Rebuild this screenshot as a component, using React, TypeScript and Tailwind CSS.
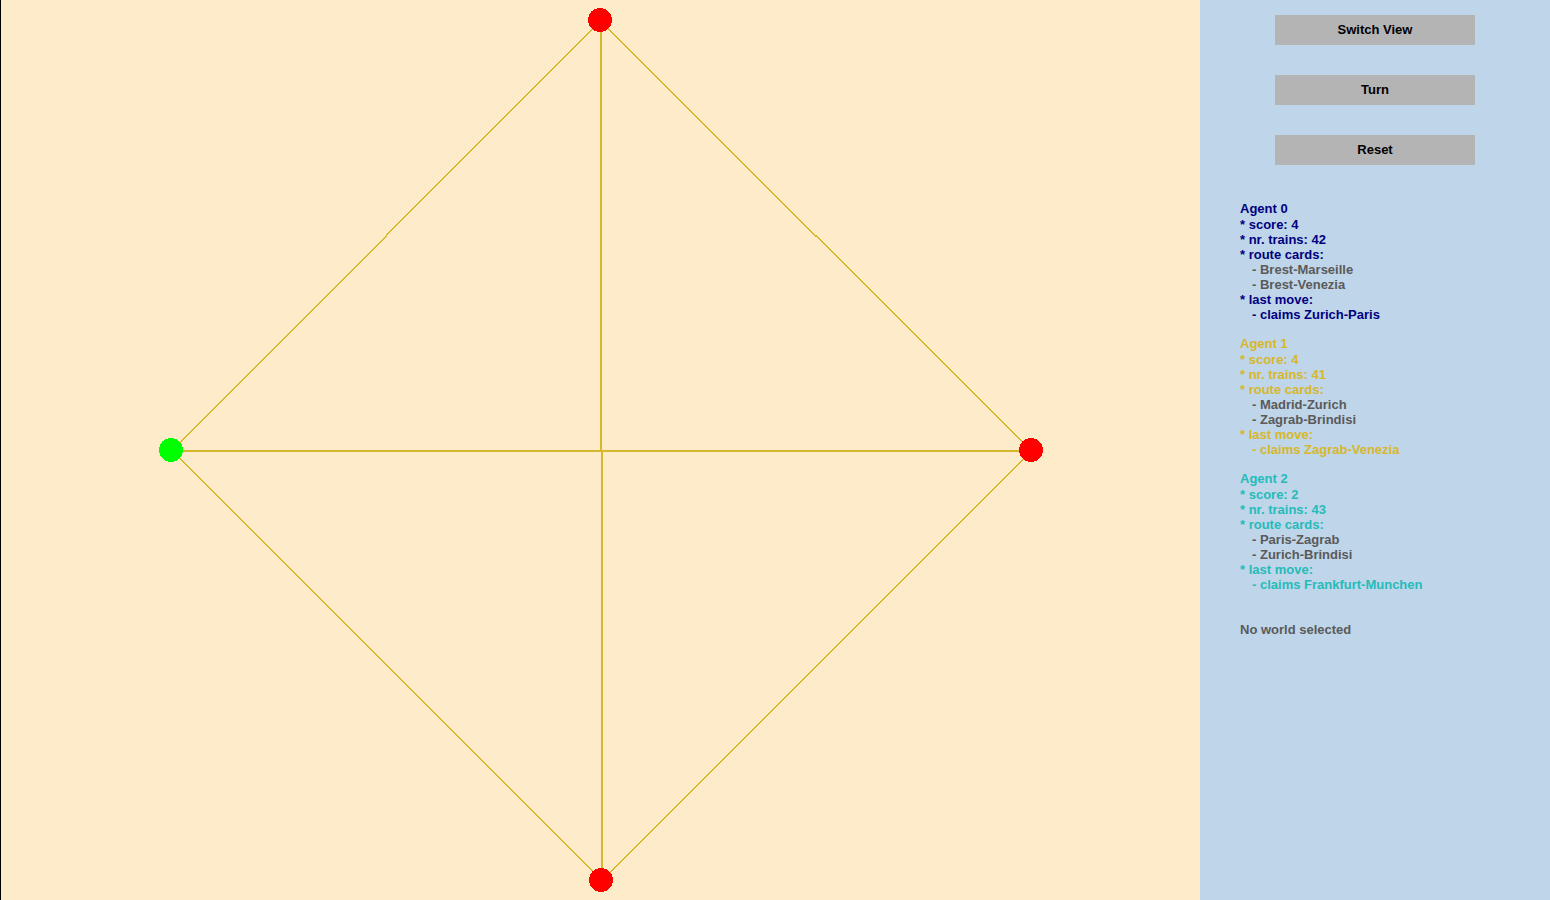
type Agent = {
  name: string;
  score: number;
  trains: number;
  cards: string[];
  lastMove: string;
  color: string;
};

const agents: Agent[] = [
  {
    name: "Agent 0",
    score: 4,
    trains: 42,
    cards: ["Brest-Marseille", "Brest-Venezia"],
    lastMove: "claims Zurich-Paris",
    color: "text-[#000080]",
  },
  {
    name: "Agent 1",
    score: 4,
    trains: 41,
    cards: ["Madrid-Zurich", "Zagrab-Brindisi"],
    lastMove: "claims Zagrab-Venezia",
    color: "text-[#d7b72b]",
  },
  {
    name: "Agent 2",
    score: 2,
    trains: 43,
    cards: ["Paris-Zagrab", "Zurich-Brindisi"],
    lastMove: "claims Frankfurt-Munchen",
    color: "text-[#26bbb9]",
  },
];

const nodes = [
  { id: "north", x: 600, y: 20, fill: "#ff0000" },
  { id: "west", x: 171, y: 450, fill: "#00ff00" },
  { id: "east", x: 1031, y: 450, fill: "#ff0000" },
  { id: "south", x: 601, y: 880, fill: "#ff0000" },
];

function WorldGraph() {
  return (
    <svg
      viewBox="1 0 1199 900"
      className="block h-full w-full"
      role="img"
      aria-label="World graph"
    >
      <g fill="none" stroke="#d7b72b" shapeRendering="crispEdges">
        <g strokeWidth="1.414">
          <path d="M171 451.5 L387 235.5 M386 235.5 L601 20.5" />
          <path d="M600 20.5 L816 236.5 M816 235.5 L1031 450.5" />
          <path d="M171 449.5 L601 879.5" />
          <path d="M1032 450.5 L602 880.5" />
        </g>
        <g strokeWidth="2">
          <path d="M601 20 V450" />
          <path d="M602 450 V880" />
          <path d="M171 451 H1031" />
        </g>
      </g>
      <g shapeRendering="crispEdges">
        {nodes.map((n) => (
          <circle key={n.id} cx={n.x} cy={n.y} r="12" fill={n.fill} />
        ))}
      </g>
    </svg>
  );
}

function PanelButton({ label }: { label: string }) {
  return (
    <button
      type="button"
      className="h-[30px] w-[200px] cursor-pointer bg-[#b4b4b4] pb-0.5 font-bold text-black"
    >
      {label}
    </button>
  );
}

function AgentInfo({ agent }: { agent: Agent }) {
  return (
    <section className={agent.color}>
      <h2 className="pb-px">{agent.name}</h2>
      <p>* score: {agent.score}</p>
      <p>* nr. trains: {agent.trains}</p>
      <p>* route cards:</p>
      <ul className="pl-3 text-[#5a5a5a]">
        {agent.cards.map((card) => (
          <li key={card}>- {card}</li>
        ))}
      </ul>
      <p>* last move:</p>
      <p className="pl-3">- {agent.lastMove}</p>
    </section>
  );
}

export default function App() {
  return (
    <div className="flex h-screen bg-[#feebc9] font-['Liberation_Sans',Arial,sans-serif] text-[13px] leading-[15px] font-bold">
      <main className="min-w-0 flex-1 border-l border-black">
        <WorldGraph />
      </main>
      <aside className="w-[350px] shrink-0 overflow-y-auto bg-[#bfd5e9] pt-[15px]">
        <div className="flex flex-col items-center gap-[30px]">
          <PanelButton label="Switch View" />
          <PanelButton label="Turn" />
          <PanelButton label="Reset" />
        </div>
        <div className="flex flex-col gap-3.5 px-10 pt-9">
          {agents.map((agent) => (
            <AgentInfo key={agent.name} agent={agent} />
          ))}
        </div>
        <p className="px-10 pt-[30px] text-[#5a5a5a]">No world selected</p>
      </aside>
    </div>
  );
}
